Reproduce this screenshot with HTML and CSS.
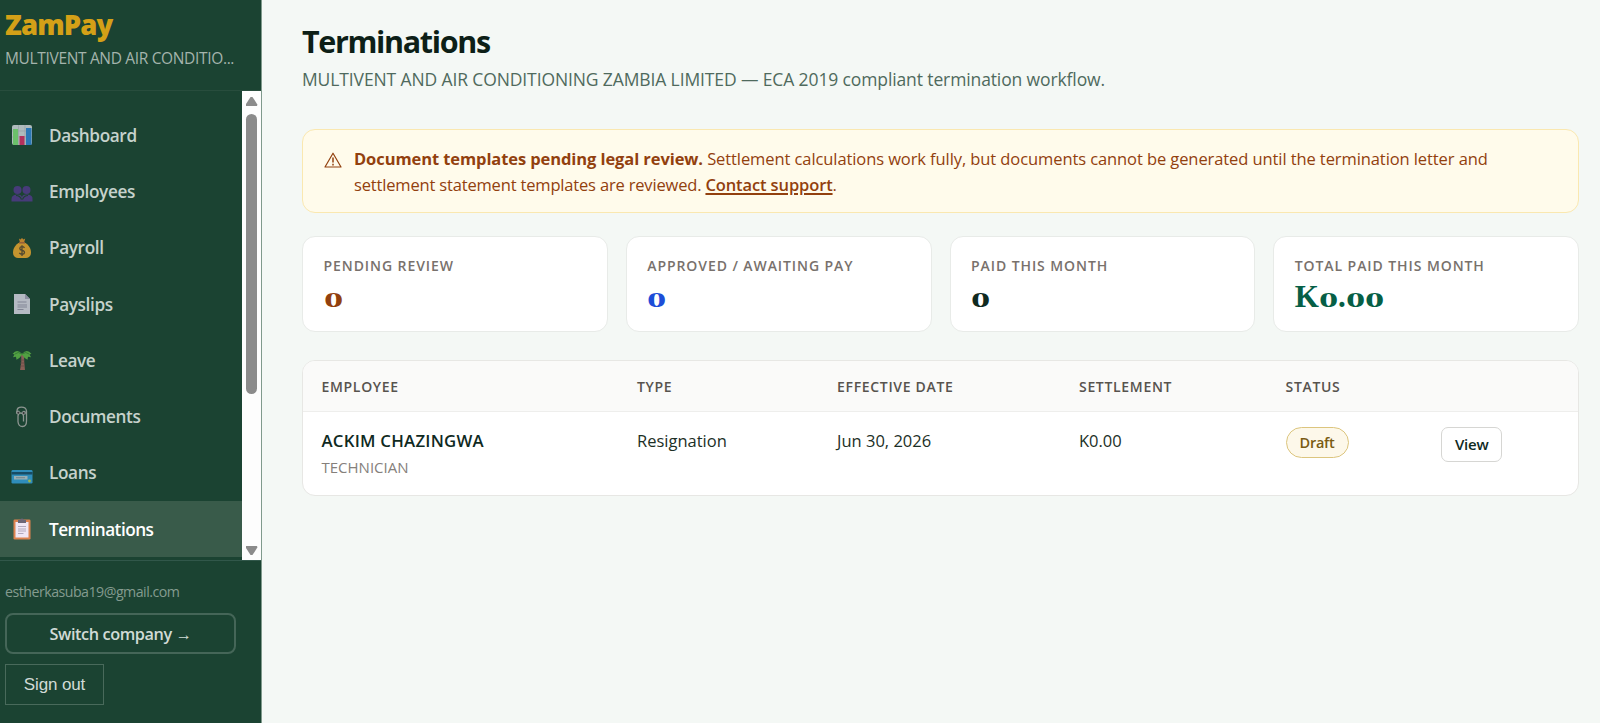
FILE: index.html
```html
<!DOCTYPE html>
<html lang="en">
<head>
<meta charset="utf-8">
<title>ZamPay – Terminations</title>
<link rel="stylesheet" href="styles.css">
</head>
<body>
<div class="app">
  <aside class="sidebar">
    <div class="brand">
      <div class="logo">ZamPay</div>
      <div class="company">MULTIVENT AND AIR CONDITIO...</div>
    </div>
    <div class="nav-wrap">
      <nav class="nav">
        <a class="item"><svg class="ico" viewBox="0 0 22 22"><rect x="1" y="1" width="20" height="20" rx="2" fill="#d5d9df"/><path d="M7.500 1v20M14 1v20M1 7h20M1 13h20" stroke="#b4b9c4" stroke-width=".7"/><rect x="2" y="5" width="5" height="16" fill="#7fe07a"/><rect x="8.500" y="12" width="5" height="9" fill="#d92d68"/><rect x="15" y="4" width="5.500" height="17" fill="#2f86d8"/></svg><span>Dashboard</span></a>
        <a class="item"><svg class="ico low" viewBox="0 0 22 22"><g fill="#533a8c"><circle cx="6.500" cy="7" r="4"/><circle cx="15.500" cy="7" r="4"/><path d="M.500 18.500v-2.500q0-4 5-4.500t5.500 3q0-3.500 5.500-3t5 4.500v2.500z"/></g><path d="M5 12.500q4 0 5.500 4M17 12.500q-4 0-5.500 4" stroke="#1b4332" stroke-width="1.200" fill="none"/></svg><span>Employees</span></a>
        <a class="item"><svg class="ico" viewBox="0 0 22 22"><path d="M8 1.500l1.500 1L11 1l1.500 1.500 1.700-1L13 6H9z" fill="#e5932c"/><path d="M8.500 5.500h5c4 2 6.500 6 6.500 10 0 4-2.500 5.500-5 5.500H7c-2.500 0-5-1.500-5-5.500 0-4 2.500-8 6.500-10z" fill="#f0a92f"/><path d="M8 5.800h6" stroke="#b5653a" stroke-width="1.500"/><path d="M13.500 10.800q-1-1.300-2.700-1.100-2 .2-2 1.800t2.200 1.900q2.500.4 2.500 2t-2.200 1.900q-2 .1-3-1.400M11 8.300v10.600" fill="none" stroke="#5f4a31" stroke-width="1.300"/></svg><span>Payroll</span></a>
        <a class="item"><svg class="ico" viewBox="0 0 22 22"><path d="M3 1h11l5 5v15H3z" fill="#dcd8e8"/><path d="M14 1v5h5z" fill="#aaa3bd"/><path d="M6.500 9h9M6.500 12h9.500M6.500 14h9.500M6.500 16.500h6" stroke="#9c97ae" stroke-width="1"/></svg><span>Payslips</span></a>
        <a class="item"><svg class="ico" viewBox="0 0 22 22"><path d="M10 6q1 6-1 15h5q-1-8-1-15z" fill="#a2665f"/><path d="M9.500 11h3.800M9.300 14h4M9 17h4.500" stroke="#7c4b4d" stroke-width=".8"/><path d="M11 5Q6-1 1.500 5l2 .3-1.500 3 3-.5.500 3q3-1 5.500-5 2.500 4 5.500 5l.5-3 3 .5-1.500-3 2-.3Q16-1 11 5z" fill="#5fb847"/><path d="M11 5Q7 2 4 5M11 5q4-3 7 0" stroke="#3f8a38" fill="none"/></svg><span>Leave</span></a>
        <a class="item"><svg class="ico" viewBox="0 0 22 22"><path d="M6 7.500V5q0-3.800 4.500-3.800T15.500 5v10q0 5.500-4 5.500t-4.500-4.800V10q.2-3 2.700-3t2.800 3v5.500" fill="none" stroke="#a9aaa8" stroke-width="1.300"/><circle cx="7" cy="6.500" r="2" fill="#a9aaa8"/><circle cx="13" cy="6.800" r="2" fill="#a9aaa8"/><circle cx="7.300" cy="6.700" r="1" fill="#382f35"/><circle cx="12.700" cy="7" r="1" fill="#382f35"/></svg><span>Documents</span></a>
        <a class="item"><svg class="ico low" viewBox="0 0 22 22"><rect x=".500" y="5" width="21" height="13.500" rx="1.200" fill="#35a0dc"/><rect x=".500" y="7" width="21" height="2.500" fill="#184f72"/><rect x="3" y="11" width="13.500" height="3.500" fill="#b9cbd6"/><path d="M5 12.700h9" stroke="#7c8c98" stroke-width=".8"/><circle cx="18.500" cy="16" r="1.400" fill="#b9d54f"/></svg><span>Loans</span></a>
        <a class="item active"><svg class="ico" viewBox="0 0 22 22"><rect x="2.500" y="1.500" width="17" height="20" rx="1.300" fill="#dd8350"/><path d="M4.500 4h13v15.500h-13z" fill="#f0e7f5"/><path d="M7 5V2h2q0-1.500 2-1.500T13 2h2v3z" fill="#6d6676"/><path d="M7 8.500h8M7 11h8M7 13h8M7 15.500h5.500" stroke="#aaa2b7" stroke-width=".9"/></svg><span>Terminations</span></a>
      </nav>
      <div class="scrollbar"><i class="up"></i><i class="thumb"></i><i class="down"></i></div>
    </div>
    <div class="foot">
      <div class="email">estherkasuba19@gmail.com</div>
      <a class="switch">Switch company →</a>
      <a class="signout">Sign out</a>
    </div>
  </aside>
  <main class="main">
    <h1 class="title">Terminations</h1>
    <p class="sub">MULTIVENT AND AIR CONDITIONING ZAMBIA LIMITED — ECA 2019 compliant termination workflow.</p>
    <section class="alert">
      <svg class="warn" viewBox="0 0 18 16"><path d="M9 1.200L17 15H1z" fill="none" stroke="#92400e" stroke-width="1.200" stroke-linejoin="round"/><path d="M9 5.500v5M9 11.800v1.600" stroke="#92400e" stroke-width="1.500"/></svg>
      <p class="alert-text"><strong>Document templates pending legal review.</strong> <span>Settlement calculations work fully, but documents cannot be generated until the termination letter and</span><br><span class="tight">settlement statement templates are reviewed. </span><a class="link">Contact support</a>.</p>
    </section>
    <section class="stats">
      <div class="card"><div class="label">PENDING REVIEW</div><div class="value brown"><span class="z">0</span></div></div>
      <div class="card"><div class="label">APPROVED / AWAITING PAY</div><div class="value blue"><span class="z">0</span></div></div>
      <div class="card"><div class="label">PAID THIS MONTH</div><div class="value dark"><span class="z">0</span></div></div>
      <div class="card"><div class="label">TOTAL PAID THIS MONTH</div><div class="value green">K<span class="z">0</span>.<span class="z">0</span><span class="z">0</span></div></div>
    </section>
    <section class="table">
      <div class="row head"><span>EMPLOYEE</span><span>TYPE</span><span>EFFECTIVE DATE</span><span>SETTLEMENT</span><span>STATUS</span><span></span></div>
      <div class="row body">
        <div><div class="name">ACKIM CHAZINGWA</div><div class="role">TECHNICIAN</div></div>
        <div>Resignation</div><div>Jun 30, 2026</div><div>K0.00</div>
        <div><span class="pill">Draft</span></div><div><a class="view">View</a></div>
      </div>
    </section>
  </main>
</div>
</body>
</html>
```
FILE: styles.css
```css
* { box-sizing: border-box; }
body { margin: 0; font-family: "Open Sans", "Noto Sans", sans-serif; background: #f4f8f5; color: #14291f; }
.app { display: flex; height: 723px; overflow: hidden; }
.sidebar { width: 262px; flex: none; display: flex; flex-direction: column; background: #1b4332; border-right: 1px solid #7f9a8c; }
.brand { height: 91px; padding: 7px 5px 0; border-bottom: 1px solid #284d3d; white-space: nowrap; }
.logo { font-size: 27.5px; line-height: 36px; font-weight: 800; letter-spacing: -.87px; color: #d4a017; }
.company { margin-top: 3px; font-size: 15.5px; line-height: 24px; letter-spacing: -.34px; color: #a4b4ac; }
.nav-wrap { height: 469px; display: flex; overflow: hidden; }
.nav { flex: 1; padding-top: 16px; }
.item { display: flex; align-items: center; gap: 16px; height: 56.3px; padding-left: 11px; font-size: 17.2px; font-weight: 600; letter-spacing: -.38px; color: #c6d2cc; }
.ico { width: 22px; height: 22px; opacity: .8; flex: none; }
.ico.low { position: relative; top: 3px; }
.item.active { background: #395b4a; color: #fff; letter-spacing: -.5px; }
.active .ico { opacity: 1; }
.scrollbar { width: 19px; background: #fdfdfd; display: flex; flex-direction: column; align-items: center; }
.up, .down { width: 12px; height: 9px; background: #8b8b8b; flex: none; }
.up { margin-top: 6px; clip-path: polygon(42% 0, 58% 0, 100% 85%, 95% 100%, 5% 100%, 0 85%); }
.down { margin-top: auto; margin-bottom: 5px; clip-path: polygon(5% 0, 95% 0, 100% 15%, 58% 100%, 42% 100%, 0 15%); }
.thumb { width: 11px; height: 280px; margin-top: 8px; border-radius: 6px; background: #8b8b8b; }
.foot { flex: 1; border-top: 1px solid #31574a; padding: 20px 25px 0 5px; }
.email { font-size: 14.2px; line-height: 22px; letter-spacing: -.51px; color: #849b8f; }
.switch { display: flex; align-items: center; justify-content: center; height: 41px; margin-top: 10px; border: 2px solid #456658; border-radius: 8px; font-size: 16.3px; font-weight: 600; letter-spacing: -.42px; color: #d1dbd6; }
.signout { display: flex; align-items: center; justify-content: center; width: 99px; height: 41px; margin-top: 10px; border: 1px solid #496a5b; font: 17px "Liberation Sans", sans-serif; letter-spacing: -.11px; color: #d1dbd6; }
.main { flex: 1; padding: 22px 21px 0 40px; }
.title { margin: 0; font-size: 30.5px; line-height: 39px; font-weight: 700; letter-spacing: -1.35px; color: #0d1f17; }
.sub { margin: 5px 0 0; font-size: 17.5px; line-height: 26px; letter-spacing: -.119px; color: #4f6a5d; white-space: nowrap; }
.alert { display: flex; margin-top: 37px; height: 84px; padding: 16px 20px 0; border: 1px solid #fae8b0; border-radius: 13px; background: #fffbeb; color: #92400e; }
.warn { width: 18px; height: 16px; margin: 6px 12px 0 1px; flex: none; }
.alert-text { margin: 0; font-size: 16.5px; line-height: 25.5px; letter-spacing: -.09px; white-space: nowrap; }
.tight { letter-spacing: -.17px; }
.link { font-weight: 600; letter-spacing: -.12px; text-decoration: underline; text-decoration-thickness: 2px; text-underline-offset: 2px; }
.stats { display: grid; grid-template-columns: repeat(4, 1fr); gap: 18px; margin-top: 23px; }
.card { height: 96px; padding: 18px 20.5px 0; border: 1px solid #e8ebe8; border-radius: 13px; background: #fff; }
.label { font-size: 14px; line-height: 22px; font-weight: 600; letter-spacing: .92px; color: #78716c; white-space: nowrap; }
.value { font: bold 31px/39px "Liberation Serif", serif; }
.z { display: inline-block; font-size: 22px; width: 19px; transform: scaleX(1.75); transform-origin: 0 50%; }
.brown { color: #92400e; }
.blue { color: #1d4ed8; }
.dark { color: #0f2a1f; }
.green { color: #065f46; }
.table { margin-top: 28px; height: 136px; border: 1px solid #e7e7e4; border-radius: 13px; background: #fff; overflow: hidden; }
.row { display: grid; grid-template-columns: 315.5px 200px 242px 206.5px 155.5px 1fr; padding-left: 18.5px; white-space: nowrap; }
.row > * { justify-self: start; }
.head { height: 51px; align-items: center; background: #fafaf9; border-bottom: 1px solid #eeeeec; font-size: 14px; font-weight: 600; letter-spacing: .68px; color: #57534e; }
.body { padding-top: 15px; font-size: 16.5px; line-height: 27px; color: #1c2f26; }
.name { font-size: 16.8px; font-weight: 600; letter-spacing: .24px; color: #0f2a1f; }
.role { font-size: 15px; line-height: 26px; color: #85807b; }
.pill { display: flex; align-items: center; height: 31px; padding: 0 13px; border: 1px solid #dcc57e; border-radius: 16px; background: #fdf8ea; font-size: 14.5px; font-weight: 600; letter-spacing: -.25px; color: #7a5c13; }
.view { display: flex; align-items: center; height: 35px; padding: 0 13px; border: 1px solid #d6d6d3; border-radius: 7px; background: #fff; font-size: 15px; font-weight: 600; letter-spacing: -.23px; color: #0f2a1f; }
```
